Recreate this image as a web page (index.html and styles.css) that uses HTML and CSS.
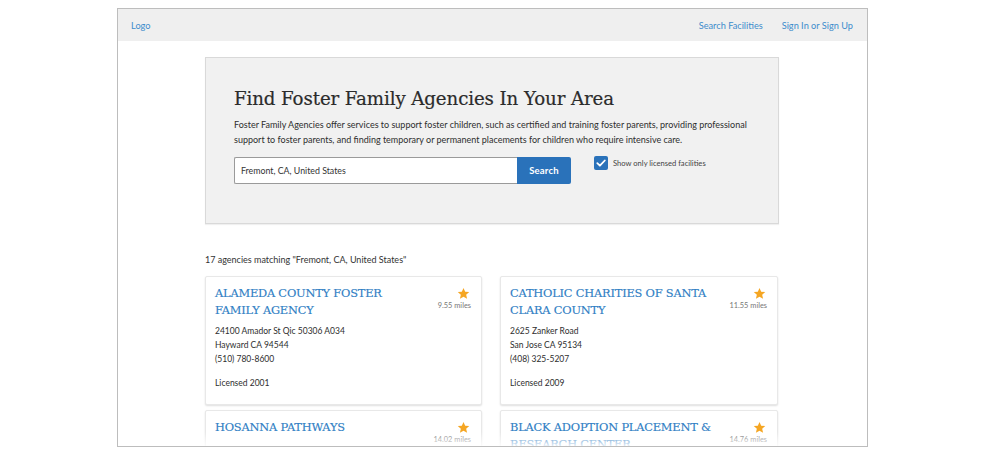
FILE: index.html
```html
<!DOCTYPE html>
<html lang="en">
<head>
<meta charset="utf-8">
<title>Find Foster Family Agencies</title>
<link rel="stylesheet" href="styles.css">
</head>
<body>
<div class="frame">
  <header class="topbar">
    <a class="logo" href="#">Logo</a>
    <nav class="nav">
      <a href="#">Search Facilities</a>
      <a href="#">Sign In or Sign Up</a>
    </nav>
  </header>
  <main class="container">
    <section class="hero">
      <h1 class="hero-title">Find Foster Family Agencies In Your Area</h1>
      <p class="hero-text">Foster Family Agencies offer services to support foster children, such as certified and training foster parents, providing professional support to foster parents, and finding temporary or permanent placements for children who require intensive care.</p>
      <div class="search-row">
        <div class="search-box">
          <input class="search-input" type="text" value="Fremont, CA, United States">
          <button class="search-btn" type="button">Search</button>
        </div>
        <label class="check">
          <span class="check-box"><svg viewBox="0 0 14 14" width="14" height="14"><path d="M3.3 7.2 L5.9 9.7 L10.8 4.5" fill="none" stroke="#fff" stroke-width="1.8" stroke-linecap="round" stroke-linejoin="round"/></svg></span>
          <span class="check-label">Show only licensed facilities</span>
        </label>
      </div>
    </section>

    <p class="count">17 agencies matching "Fremont, CA, United States"</p>

    <div class="cards">
      <article class="card">
        <div class="card-head">
          <h2 class="card-title">ALAMEDA COUNTY FOSTER FAMILY AGENCY</h2>
          <div class="card-meta">
            <svg class="star" viewBox="0 0 24 24" width="13" height="13"><path d="M12 1.8l3.1 6.9 7.5.7-5.7 5 1.7 7.4L12 17.9l-6.6 3.9 1.7-7.4-5.7-5 7.5-.7z" fill="#f5a623"/></svg>
            <span class="miles">9.55 miles</span>
          </div>
        </div>
        <div class="card-body">
          <div>24100 Amador St Qic 50306 A034</div>
          <div>Hayward CA 94544</div>
          <div>(510) 780-8600</div>
        </div>
        <div class="licensed">Licensed 2001</div>
      </article>
      <article class="card">
        <div class="card-head">
          <h2 class="card-title">CATHOLIC CHARITIES OF SANTA CLARA COUNTY</h2>
          <div class="card-meta">
            <svg class="star" viewBox="0 0 24 24" width="13" height="13"><path d="M12 1.8l3.1 6.9 7.5.7-5.7 5 1.7 7.4L12 17.9l-6.6 3.9 1.7-7.4-5.7-5 7.5-.7z" fill="#f5a623"/></svg>
            <span class="miles">11.55 miles</span>
          </div>
        </div>
        <div class="card-body">
          <div>2625 Zanker Road</div>
          <div>San Jose CA 95134</div>
          <div>(408) 325-5207</div>
        </div>
        <div class="licensed">Licensed 2009</div>
      </article>
      <article class="card">
        <div class="card-head">
          <h2 class="card-title">HOSANNA PATHWAYS</h2>
          <div class="card-meta">
            <svg class="star" viewBox="0 0 24 24" width="13" height="13"><path d="M12 1.8l3.1 6.9 7.5.7-5.7 5 1.7 7.4L12 17.9l-6.6 3.9 1.7-7.4-5.7-5 7.5-.7z" fill="#f5a623"/></svg>
            <span class="miles">14.02 miles</span>
          </div>
        </div>
        <div class="card-body">
          <div>1016 Crane Avenue, Suite B</div>
          <div>Oakland CA 94607</div>
          <div>(510) 555-0142</div>
        </div>
        <div class="licensed">Licensed 2004</div>
      </article>
      <article class="card">
        <div class="card-head">
          <h2 class="card-title">BLACK ADOPTION PLACEMENT &amp; RESEARCH CENTER</h2>
          <div class="card-meta">
            <svg class="star" viewBox="0 0 24 24" width="13" height="13"><path d="M12 1.8l3.1 6.9 7.5.7-5.7 5 1.7 7.4L12 17.9l-6.6 3.9 1.7-7.4-5.7-5 7.5-.7z" fill="#f5a623"/></svg>
            <span class="miles">14.76 miles</span>
          </div>
        </div>
        <div class="card-body">
          <div>125 Second Street</div>
          <div>Oakland CA 94607</div>
          <div>(510) 839-3678</div>
        </div>
        <div class="licensed">Licensed 1995</div>
      </article>
    </div>
  </main>
  <div class="fade"></div>
</div>
</body>
</html>
```

FILE: styles.css
```css
* { box-sizing: border-box; }

html, body {
  margin: 0;
  padding: 0;
  background: #fff;
}

body {
  font-family: "Lato", "Open Sans", sans-serif;
  color: #333;
}

.frame {
  position: relative;
  width: 751px;
  height: 439px;
  margin: 8px auto 0;
  border: 1px solid #bdbdbd;
  overflow: hidden;
  background: #fff;
}

.topbar {
  display: flex;
  align-items: center;
  justify-content: space-between;
  height: 32px;
  padding: 0 14px 0 13px;
  background: #efefef;
  font-size: 9.2px;
}

.topbar a {
  color: #3d8ccc;
  text-decoration: none;
}

.nav {
  display: flex;
  gap: 19px;
}

.container {
  width: 575px;
  margin: 0 auto;
  padding-top: 16px;
}

.hero {
  background: #f1f1f1;
  border: 1px solid #d9d9d9;
  box-shadow: 0 1px 1px rgba(0, 0, 0, 0.06);
  padding: 28px 28px 40px;
  height: 167px;
  margin-right: 1px;
}

.hero-title {
  margin: 0 0 5px;
  font-family: "DejaVu Serif", serif;
  font-weight: normal;
  font-size: 18.2px;
  line-height: 26px;
  color: #2b2b2b;
  letter-spacing: -0.1px;
  -webkit-text-stroke: 0.2px #2b2b2b;
}

.hero-text {
  margin: 0 0 10px;
  font-size: 9px;
  line-height: 15px;
  color: #2e2e2e;
}

.search-row {
  display: flex;
  align-items: flex-start;
  gap: 23px;
}

.search-box {
  display: flex;
  height: 27px;
}

.search-input {
  width: 283px;
  height: 27px;
  margin: 0;
  padding: 0 6px;
  border: 1px solid #9a9a9a;
  border-right: none;
  border-radius: 2px 0 0 2px;
  background: #fff;
  font-family: "Lato", sans-serif;
  font-size: 8.8px;
  color: #333;
  outline: none;
}

.search-btn {
  width: 54px;
  height: 27px;
  margin: 0;
  padding: 0;
  border: none;
  border-radius: 0 2px 2px 0;
  background: #2a72ba;
  color: #fff;
  font-family: "Lato", sans-serif;
  font-weight: bold;
  font-size: 9.5px;
  letter-spacing: 0.2px;
}

.check {
  display: flex;
  align-items: center;
  gap: 5px;
  height: 14px;
  margin-top: -1px;
}

.check-box {
  display: flex;
  width: 14px;
  height: 14px;
  border-radius: 2px;
  background: #2a72ba;
}

.check-label {
  font-size: 7.6px;
  color: #444;
}

.count {
  margin: 29px 0 9px;
  font-size: 9px;
  line-height: 14px;
  color: #333;
}

.cards {
  display: grid;
  grid-template-columns: 277px 278px;
  column-gap: 18px;
  row-gap: 5px;
}

.card {
  border: 1px solid #e8e8e8;
  border-radius: 2px;
  box-shadow: 0 1px 2px rgba(0, 0, 0, 0.13);
  padding: 8px 10px 14px 9px;
  background: #fff;
}

.card-head {
  display: flex;
  justify-content: space-between;
  gap: 10px;
}

.card-title {
  margin: 0;
  font-family: "DejaVu Serif", serif;
  font-weight: normal;
  font-size: 11.4px;
  line-height: 17px;
  letter-spacing: -0.2px;
  color: #2f7ec4;
  max-width: 215px;
  -webkit-text-stroke: 0.15px #2f7ec4;
}

.card-meta {
  display: flex;
  flex-direction: column;
  align-items: flex-end;
  padding-top: 2px;
  flex-shrink: 0;
}

.star {
  display: block;
  margin-right: 1px;
}

.miles {
  margin-top: 1px;
  font-size: 7.4px;
  color: #777;
}

.card-body {
  margin-top: 5px;
  font-size: 8.5px;
  line-height: 14px;
  color: #2e2e2e;
}

.licensed {
  margin-top: 10px;
  font-size: 8.5px;
  line-height: 14px;
  color: #2e2e2e;
}

.fade {
  position: absolute;
  left: 0;
  right: 0;
  bottom: 0;
  height: 14px;
  background: linear-gradient(to bottom, rgba(255, 255, 255, 0), rgba(255, 255, 255, 0.85));
  pointer-events: none;
}
```
